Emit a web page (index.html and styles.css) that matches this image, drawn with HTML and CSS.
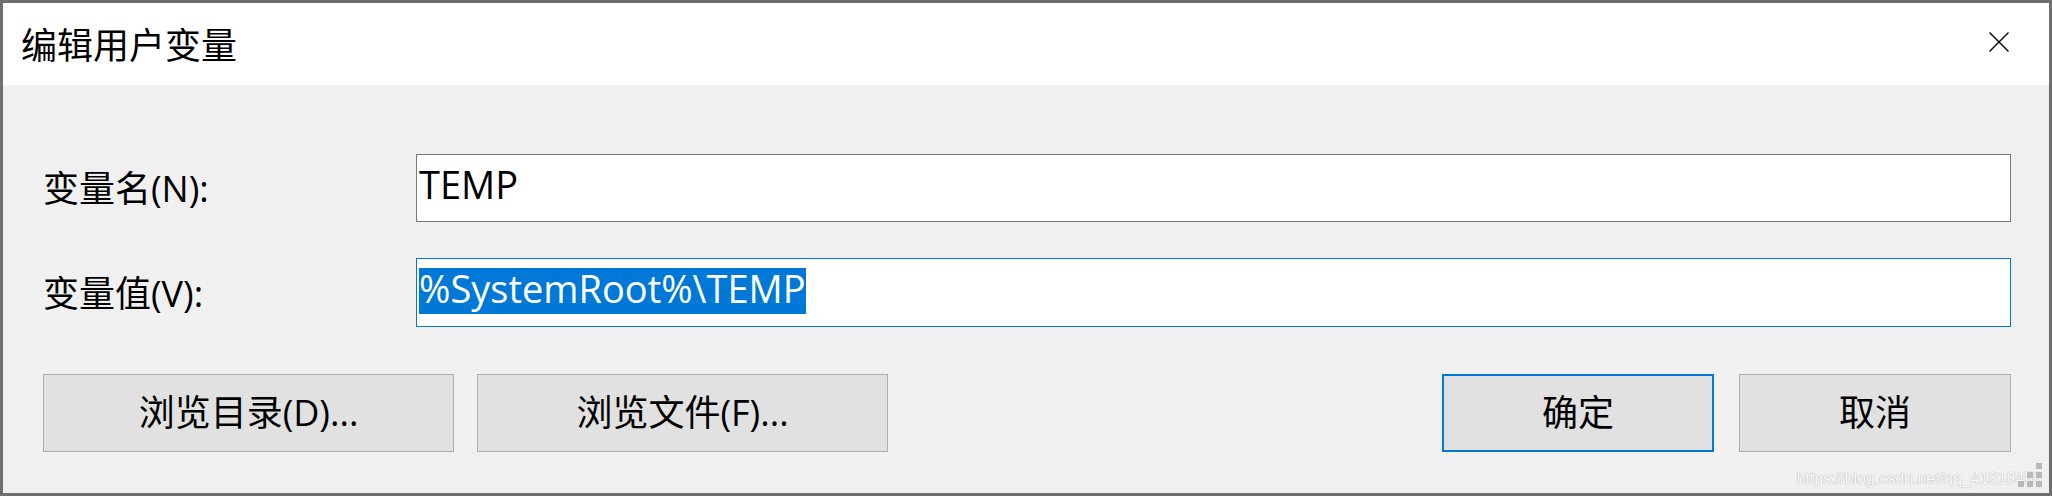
FILE: index.html
```html
<!DOCTYPE html>
<html lang="zh-CN">
<head>
<meta charset="utf-8">
<title>编辑用户变量</title>
<link rel="stylesheet" href="styles.css">
</head>
<body>
<div class="dialog">
  <div class="titlebar">
    <span class="title">编辑用户变量</span>
    <span class="close" aria-label="关闭">
      <svg width="20" height="20" viewBox="0 0 20 20"><path d="M0.5 0.5 L19.5 19.5 M19.5 0.5 L0.5 19.5" stroke="#000" stroke-width="1.4" fill="none"/></svg>
    </span>
  </div>
  <div class="content">
    <div class="form">
      <label class="label">变量名(N):</label>
      <div class="field"><span class="value">TEMP</span></div>
      <label class="label">变量值(V):</label>
      <div class="field field-focus"><span class="value selected">%SystemRoot%\TEMP</span></div>
    </div>
    <div class="actions">
      <div class="group group-left">
        <button class="btn btn-wide">浏览目录(D)...</button>
        <button class="btn btn-wide">浏览文件(F)...</button>
      </div>
      <div class="group group-right">
        <button class="btn btn-narrow btn-default">确定</button>
        <button class="btn btn-narrow">取消</button>
      </div>
    </div>
  </div>
  <div class="watermark">https://blog.csdn.net/qq_41818458</div>
  <div class="grip">
    <svg width="24" height="24" viewBox="0 0 24 24" fill="#b4b4b4">
      <rect x="18" y="0" width="6" height="6"/>
      <rect x="9" y="9" width="6" height="6"/><rect x="18" y="9" width="6" height="6"/>
      <rect x="0" y="18" width="6" height="6"/><rect x="9" y="18" width="6" height="6"/><rect x="18" y="18" width="6" height="6"/>
    </svg>
  </div>
</div>
</body>
</html>
```
FILE: styles.css
```css
html, body {
  margin: 0;
  padding: 0;
}
body {
  background: #6f6f6f;
  width: 2052px;
  height: 496px;
  overflow: hidden;
  font-family: "Open Sans", "Noto Sans CJK SC", sans-serif;
  color: #000;
}
.dialog {
  position: relative;
  margin: 3px 0 0 3px;
  width: 2046px;
  height: 490px;
  background: #f0f0f0;
  display: flex;
  flex-direction: column;
}
.titlebar {
  height: 82px;
  flex: none;
  background: #fff;
  display: flex;
  align-items: center;
  justify-content: space-between;
  padding: 0 40px 0 18px;
}
.title {
  font-family: "Noto Sans CJK SC", sans-serif;
  font-size: 36px;
  line-height: 1.2;
}
.close {
  display: flex;
  margin-bottom: 4px;
}
.content {
  flex: 1;
  padding: 69px 38px 0 40px;
}
.form {
  display: grid;
  grid-template-columns: 373px 1fr;
  row-gap: 36px;
  align-items: center;
}
.label {
  font-size: 36px;
  line-height: 1.2;
  margin-top: 2px;
}
.field {
  box-sizing: border-box;
  height: 68px;
  background: #fff;
  border: 1px solid #7a7a7a;
  padding: 3px 2px 0;
  font-size: 38px;
}
.field-focus {
  height: 69px;
  border-color: #0078d7;
}
.value {
  display: inline-block;
  line-height: 40px;
  padding-bottom: 6px;
}
.selected {
  background: #0078d7;
  color: #fff;
}
.actions {
  margin-top: 47px;
  display: flex;
  justify-content: space-between;
}
.group {
  display: flex;
}
.group-left {
  gap: 23px;
}
.group-right {
  gap: 25px;
}
.btn {
  box-sizing: border-box;
  height: 78px;
  margin: 0;
  padding: 0;
  background: #e1e1e1;
  border: 1px solid #adadad;
  font-family: "Open Sans", "Noto Sans CJK SC", sans-serif;
  font-size: 36px;
  line-height: 1.2;
  color: #000;
}
.btn-wide {
  width: 411px;
}
.btn-narrow {
  width: 272px;
}
.btn-default {
  border: 2px solid #0078d7;
}
.watermark {
  position: absolute;
  right: 7px;
  bottom: 5px;
  font-family: "Liberation Sans", sans-serif;
  font-size: 16px;
  line-height: 18px;
  color: #fcfcfc;
  text-shadow: 0 0 1px #a8a8a8, 0 0 1px #c0c0c0;
}
.grip {
  position: absolute;
  right: 7px;
  bottom: 6px;
  display: flex;
  opacity: 0.9;
}
```
